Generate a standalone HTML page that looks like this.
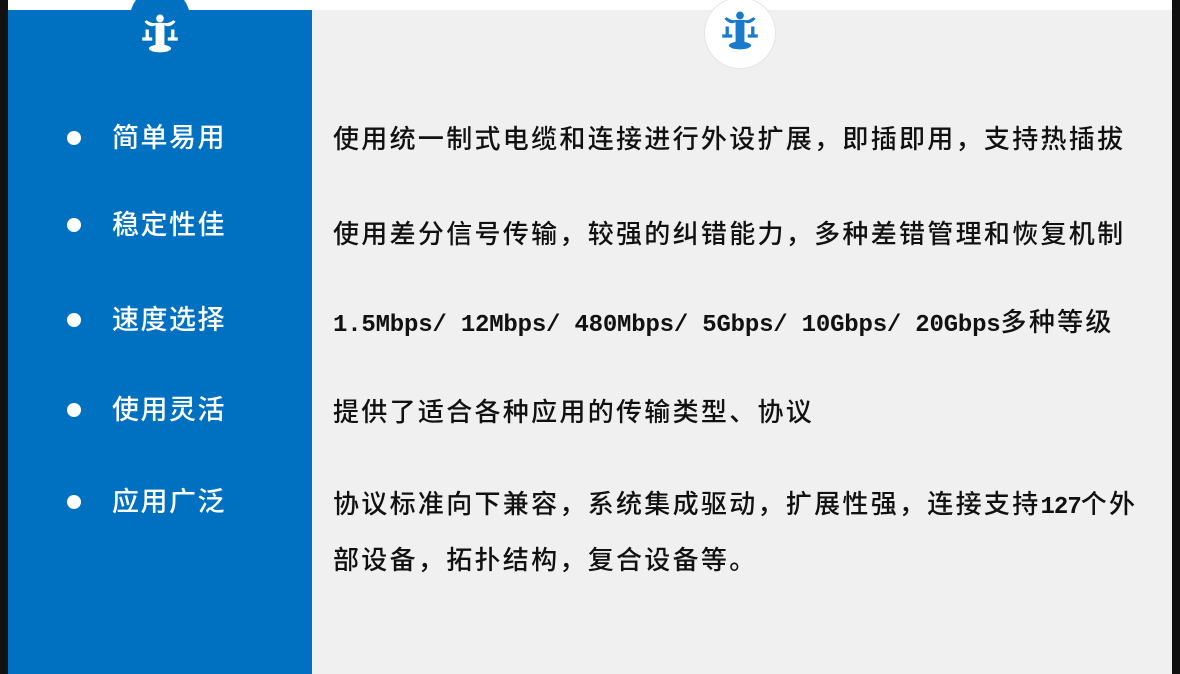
<!DOCTYPE html>
<html><head><meta charset="utf-8"><style>
body{margin:0;width:1180px;height:674px;background:#fff;position:relative;overflow:hidden;font-family:"Liberation Sans","Noto Sans CJK SC",sans-serif}
.blk{position:absolute;top:0;height:674px;background:#111}
.blue{position:absolute;left:8px;top:10px;width:304px;height:664px;background:#0070C0}
.gray{position:absolute;left:312px;top:10px;width:860px;height:664px;background:#F0F0F0}
.c1{position:absolute;left:130px;top:-12px;width:60px;height:60px;border-radius:50%;background:#0070C0}
.c2{position:absolute;left:705px;top:-2px;width:70px;height:70px;border-radius:50%;background:#fff;box-shadow:0 0 0 1px #e4e4e4}
.l{position:absolute;left:112px;color:#fff;font-size:27px;letter-spacing:1.5px;line-height:30px;font-weight:500}
.d{position:absolute;left:67px;width:14px;height:14px;border-radius:50%;background:#fff}
.r{position:absolute;left:333px;color:#111;font-size:26px;letter-spacing:2.3px;line-height:52px;width:820px;font-weight:500}
.m{font-family:"Liberation Mono",monospace;font-size:24px;letter-spacing:-0.2px;font-weight:bold}
</style></head><body>
<div class="blk" style="left:0;width:8px"></div>
<div class="blk" style="left:1172px;width:8px"></div>
<div class="blue"></div><div class="gray"></div>
<div class="c1"></div><div class="c2"></div>
<svg style="position:absolute;left:141px;top:14px" width="38" height="40" viewBox="0 0 34 36" fill="#fff"><circle cx="17" cy="4" r="3.5"/><path d="M3 7 Q8 13 13 10 L13 29 L21 29 L21 10 Q26 13 31 7 L29 5.5 Q25 9 20 8 L14 8 Q9 9 5 5.5Z"/><path d="M1 21h9v3h-9zM24 21h9v3h-9zM4 14h3v7h-3zM27 14h3v7h-3z"/><ellipse cx="17" cy="31" rx="10" ry="3.5"/></svg>
<svg style="position:absolute;left:721px;top:11px" width="38" height="40" viewBox="0 0 34 36" fill="#1a7acc"><circle cx="17" cy="4" r="3.5"/><path d="M3 7 Q8 13 13 10 L13 29 L21 29 L21 10 Q26 13 31 7 L29 5.5 Q25 9 20 8 L14 8 Q9 9 5 5.5Z"/><path d="M1 21h9v3h-9zM24 21h9v3h-9zM4 14h3v7h-3zM27 14h3v7h-3z"/><ellipse cx="17" cy="31" rx="10" ry="3.5"/></svg>
<div class="d" style="top:131px"></div><div class="l" style="top:123px">简单易用</div>
<div class="d" style="top:218px"></div><div class="l" style="top:210px">稳定性佳</div>
<div class="d" style="top:313px"></div><div class="l" style="top:305px">速度选择</div>
<div class="d" style="top:403px"></div><div class="l" style="top:395px">使用灵活</div>
<div class="d" style="top:495px"></div><div class="l" style="top:487px">应用广泛</div>
<div class="r" style="top:113px">使用统一制式电缆和连接进行外设扩展，即插即用，支持热插拔</div>
<div class="r" style="top:208px">使用差分信号传输，较强的纠错能力，多种差错管理和恢复机制</div>
<div class="r" style="top:296px"><span class="m">1.5Mbps/ 12Mbps/ 480Mbps/ 5Gbps/ 10Gbps/ 20Gbps</span>多种等级</div>
<div class="r" style="top:386px">提供了适合各种应用的传输类型、协议</div>
<div class="r" style="top:478px">协议标准向下兼容，系统集成驱动，扩展性强，连接支持<span class="m" style="letter-spacing:-1px">127</span>个外<br>部设备，拓扑结构，复合设备等。</div>
</body></html>
